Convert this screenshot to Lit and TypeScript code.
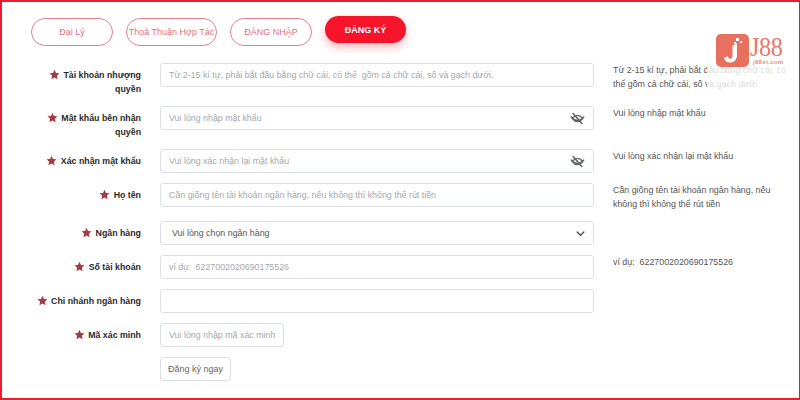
import { LitElement, html, css, svg } from "lit";
import { customElement } from "lit/decorators.js";

type Row = {
  label: string[];
  ph?: string;
  hint?: string[];
  gap: number;
  kind?: "eye" | "select" | "short" | "plain";
};

const rows: Row[] = [
  { label: ["Tài khoản nhượng", "quyền"], ph: "Từ 2-15 kí tự, phải bắt đầu bằng chữ cái, có thể  gồm cả chữ cái, số và gạch dưới.", hint: ["Từ 2-15 kí tự, phải bắt đầu bằng chữ cái, có", "thể gồm cả chữ cái, số và gạch dưới."], gap: 0 },
  { label: ["Mật khẩu bên nhận", "quyền"], ph: "Vui lòng nhập mật khẩu", hint: ["Vui lòng nhập mật khẩu"], gap: 19, kind: "eye" },
  { label: ["Xác nhận mật khẩu"], ph: "Vui lòng xác nhận lại mật khẩu", hint: ["Vui lòng xác nhận lại mật khẩu"], gap: 19, kind: "eye" },
  { label: ["Họ tên"], ph: "Cần giống tên tài khoản ngân hàng, nếu không thì không thể rút tiền", hint: ["Cần giống tên tài khoản ngân hàng, nếu", "không thì không thể rút tiền"], gap: 10 },
  { label: ["Ngân hàng"], ph: "Vui lòng chọn ngân hàng", gap: 14, kind: "select" },
  { label: ["Số tài khoản"], ph: "ví dụ:  6227002020690175526", hint: ["ví dụ:  6227002020690175526"], gap: 10 },
  { label: ["Chi nhánh ngân hàng"], gap: 10 },
  { label: ["Mã xác minh"], ph: "Vui lòng nhập mã xác minh", gap: 10, kind: "short" },
];

const star = svg`<svg class="star" viewBox="0 0 24 24" width="11" height="11"><path fill="#a63a40" d="M12 1.500l3.200 7 7.600.9-5.600 5.200 1.500 7.500L12 18.400l-6.700 3.700 1.500-7.500L1.200 9.400l7.600-.9z"/></svg>`;

const eye = svg`<svg class="eye" viewBox="0 0 24 24" width="15" height="15" fill="none" stroke="#666" stroke-width="2.200" stroke-linecap="round"><path d="M2 9.500c3 3.500 6.300 5.500 10 5.500s7-2 10-5.500M3.500 12c2.800-3.500 5.300-5 8.500-5s5.700 1.500 8.500 5c-2.800 3.500-5.300 5-8.500 5s-5.700-1.500-8.500-5z"/><path d="M5 4l14 16" stroke-width="2.600"/></svg>`;

const chevron = svg`<svg class="chev" viewBox="0 0 12 12" width="9" height="9" fill="none" stroke="#444" stroke-width="1.700" stroke-linecap="round" stroke-linejoin="round"><path d="M1.500 4l4.500 4.500L10.500 4"/></svg>`;

@customElement("app-root")
export class AppRoot extends LitElement {
  static styles = css`
    :host {
      display: block;
      width: 800px;
      height: 400px;
      font-family: "Liberation Sans", Arial, sans-serif;
      background: #fff;
    }
    .frame {
      position: relative;
      box-sizing: border-box;
      width: 800px;
      height: 400px;
      border: 2px solid #ee1c2e;
      border-right: 1px solid #b8323c;
      padding: 14px 0 0 29px;
      overflow: hidden;
    }
    .tabs {
      display: flex;
      align-items: flex-start;
      gap: 13px;
      height: 47px;
    }
    .tab {
      box-sizing: border-box;
      width: 82px;
      height: 28px;
      margin-top: 2px;
      border: 1px solid #e2808c;
      border-radius: 14px;
      color: #e4707e;
      font-size: 9px;
      display: flex;
      align-items: center;
      justify-content: center;
      white-space: nowrap;
    }
    .tab.wide {
      width: 91px;
    }
    .tab.active {
      margin-top: 0;
      width: 81px;
      height: 27px;
      border: none;
      background: #f5142a;
      color: #fff;
      font-weight: bold;
      box-shadow: 0 4px 8px rgba(245, 40, 60, 0.35);
    }
    .form {
      margin-left: -31px;
    }
    .row {
      display: grid;
      grid-template-columns: 141px 434px 170px;
      column-gap: 19px;
      height: 24px;
    }
    .label {
      font-size: 8.800px;
      font-weight: bold;
      line-height: 14px;
      text-align: right;
      color: #2b2b2b;
      padding-top: 5px;
      white-space: nowrap;
    }
    .star {
      vertical-align: -2px;
      margin-right: 1px;
    }
    .field {
      box-sizing: border-box;
      height: 24px;
      border: 1px solid #dcdfe3;
      border-radius: 3px;
      padding: 0 8px 0 8px;
      font-size: 8.850px;
      color: #a4a8ad;
      display: flex;
      align-items: center;
      justify-content: space-between;
      white-space: pre;
      overflow: hidden;
      background: #fff;
    }
    .field.select {
      color: #555;
      padding-left: 11px;
    }
    .field.short {
      width: 124px;
    }
    .hint {
      font-size: 8.850px;
      line-height: 14px;
      color: #555;
      white-space: pre;
    }
    .submit {
      box-sizing: border-box;
      margin: 10px 0 0 160px;
      width: 71px;
      height: 24px;
      border: 1px solid #dcdfe3;
      border-radius: 3px;
      font-size: 9px;
      color: #666;
      display: flex;
      align-items: center;
      justify-content: center;
    }
    .logo-veil {
      position: absolute;
      left: 705px;
      top: 30px;
      width: 90px;
      height: 62px;
      background: rgba(255, 255, 255, 0.78);
    }
    .logo {
      position: absolute;
      left: 714px;
      top: 32px;
      width: 70px;
      height: 34px;
    }
    .mark {
      position: absolute;
      left: 0;
      top: 0;
    }
    .brand {
      position: absolute;
      left: 34px;
      top: 2px;
      font-family: "Liberation Serif", serif;
      font-size: 27px;
      line-height: 22px;
      letter-spacing: -0.5px;
      color: #e9796a;
      transform: scaleX(0.9);
      transform-origin: left top;
    }
    .site {
      position: absolute;
      left: 37px;
      top: 24px;
      font-size: 6px;
      line-height: 8px;
      font-weight: bold;
      color: #ee8a7c;
      white-space: nowrap;
      letter-spacing: 0.3px;
    }
  `;

  private renderField(r: Row) {
    const cls = `field ${r.kind ?? ""}`;
    return html`<div class=${cls}>
      <span>${r.ph ?? ""}</span>
      ${r.kind === "eye" ? eye : r.kind === "select" ? chevron : ""}
    </div>`;
  }

  render() {
    return html`
      <div class="frame">
        <div class="tabs">
          <div class="tab">Đại Lý</div>
          <div class="tab wide">Thoả Thuận Hợp Tác</div>
          <div class="tab">ĐĂNG NHẬP</div>
          <div class="tab active">ĐĂNG KÝ</div>
        </div>
        <div class="form">
          ${rows.map(
            (r) => html`<div class="row" style="margin-top:${r.gap}px">
              <div class="label">
                ${star} ${r.label[0]}${r.label[1] ? html`<br />${r.label[1]}` : ""}
              </div>
              <div>${this.renderField(r)}</div>
              <div class="hint">${(r.hint ?? []).map((l) => html`${l}<br />`)}</div>
            </div>`
          )}
          <div class="submit">Đăng ký ngay</div>
        </div>
        <div class="logo-veil"></div>
        <div class="logo">
          <svg class="mark" width="33" height="33" viewBox="0 0 33 33">
            <rect width="33" height="33" rx="5" fill="#e8705f" />
            <path d="M21 9v12c0 5-3 7.500-7 7.500-3.500 0-5.500-2-6-5l4-1c.3 1.500 1 2.300 2.200 2.300 1.500 0 2.300-1 2.300-3V12z" fill="#fff" />
            <rect x="20" y="4" width="3" height="3" fill="#fff" />
            <rect x="24" y="7" width="2" height="2" fill="#fff" />
            <rect x="18" y="8" width="2" height="2" fill="#fff" />
          </svg>
          <div class="brand">J88</div>
          <div class="site">j88xt.com</div>
        </div>
      </div>
    `;
  }
}
